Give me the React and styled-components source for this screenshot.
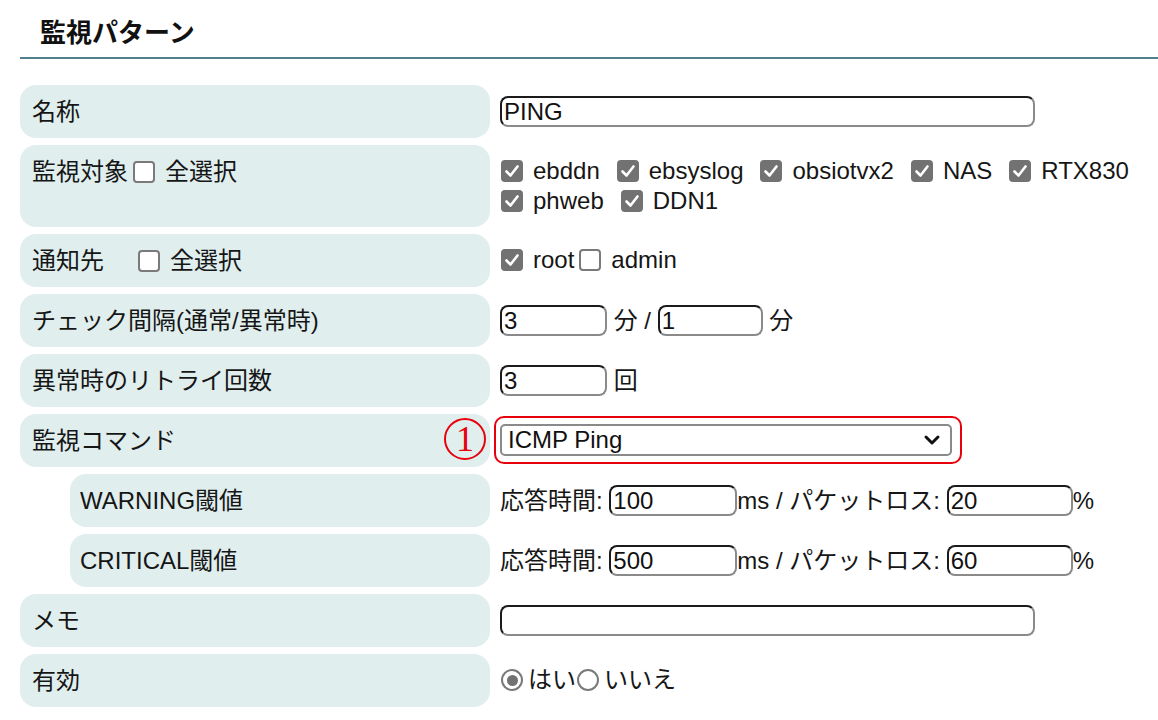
import React from "react";
import styled, { createGlobalStyle } from "styled-components";

const GlobalStyle = createGlobalStyle`
  html, body {
    margin: 0;
    padding: 0;
    background: #fff;
  }
  body {
    font-family: "Liberation Sans", "Noto Sans CJK JP", sans-serif;
    color: #111;
  }
`;

const Page = styled.div`
  width: 1158px;
  height: 720px;
  overflow: hidden;
  box-sizing: border-box;
`;

const Title = styled.h2`
  margin: 0 0 0 20px;
  padding: 14px 0 9px 20px;
  font-family: "Noto Sans CJK JP", sans-serif;
  font-size: 26px;
  font-weight: 700;
  line-height: 34px;
  color: #111;
  border-bottom: 2px solid #4f808c;
`;

const Form = styled.div`
  display: flex;
  flex-direction: column;
  gap: 7px;
  margin-top: 26px;
  padding: 0 18px 0 20px;
`;

const Row = styled.div`
  display: grid;
  grid-template-columns: 470px 1fr;
  column-gap: 10px;
`;

const Label = styled.div`
  display: flex;
  align-items: flex-start;
  margin-left: ${({ $indent }) => ($indent ? "50px" : "0")};
  padding: 11px 12px 11px ${({ $indent }) => ($indent ? "10px" : "12px")};
  background: #e0eeee;
  border-radius: 16px;
  font-size: 24px;
  line-height: 31px;
  color: #161616;
`;

const Value = styled.div`
  display: flex;
  flex-wrap: wrap;
  align-items: center;
  align-content: flex-start;
  column-gap: ${({ $gap }) => $gap ?? 0}px;
  padding: 11px 0;
  font-size: 24px;
  line-height: 30px;
  color: #161616;
  white-space: pre;
`;

const TextInput = styled.input`
  box-sizing: border-box;
  width: ${({ $width }) => $width}px;
  height: 31px;
  margin: 0;
  padding: 0 2px;
  font-family: "Liberation Sans", sans-serif;
  font-size: 24px;
  color: #111;
  background: #fff;
  border: 2px solid;
  border-color: #1b1b1b #8a8a8a #8a8a8a #1b1b1b;
  border-radius: 8px;
  outline: none;
`;

const CheckItem = styled.span`
  display: inline-flex;
  align-items: center;
  margin-left: ${({ $offset }) => $offset ?? 0}px;
`;

const Box = styled.span`
  box-sizing: border-box;
  display: inline-flex;
  align-items: center;
  justify-content: center;
  width: 22px;
  height: 22px;
  margin: 0 10px 0 1px;
  border-radius: 4px;
  background: ${({ $checked }) => ($checked ? "#727272" : "#fff")};
  border: ${({ $checked }) => ($checked ? "none" : "2px solid #7a7a7a")};
`;

const Radio = styled.span`
  box-sizing: border-box;
  display: inline-flex;
  align-items: center;
  justify-content: center;
  width: 22px;
  height: 22px;
  margin: 0 5px 0 1px;
  border-radius: 50%;
  border: 2px solid #7a7a7a;
  background: #fff;

  &::after {
    content: "";
    width: 11px;
    height: 11px;
    border-radius: 50%;
    background: ${({ $checked }) => ($checked ? "#727272" : "transparent")};
  }
`;

const Annotated = styled.div`
  position: relative;
  margin: -9px 0 -9px -6px;
  padding: 6px 8px 6px 4px;
  border: 2px solid #e8000b;
  border-radius: 10px;
`;

const Marker = styled.span`
  position: absolute;
  left: -52px;
  top: 0px;
  box-sizing: border-box;
  display: flex;
  align-items: center;
  justify-content: center;
  width: 42px;
  height: 42px;
  border: 2px solid #e8000b;
  border-radius: 50%;
  font-family: "Liberation Serif", serif;
  font-size: 36px;
  line-height: 1;
  color: #e8000b;
`;

const Select = styled.div`
  box-sizing: border-box;
  display: flex;
  align-items: center;
  justify-content: space-between;
  width: 452px;
  height: 32px;
  padding: 0 8px 0 6px;
  border: 2px solid #8a8a8a;
  border-radius: 5px;
  background: #fff;
  font-size: 24px;
  line-height: 28px;
  color: #111;
`;

const CheckMark = () => (
  <svg width="16" height="16" viewBox="0 0 16 16">
    <polyline points="2.5,8.5 6.5,12.5 13.5,3.5" fill="none" stroke="#fff" strokeWidth="2.6" strokeLinecap="round" strokeLinejoin="round" />
  </svg>
);

const Check = ({ checked, children, offset }) => (
  <CheckItem $offset={offset}>
    <Box $checked={checked}>{checked && <CheckMark />}</Box>
    {children}
  </CheckItem>
);

const Chevron = () => (
  <svg width="20" height="20" viewBox="0 0 20 20">
    <polyline points="4,7 10,13 16,7" fill="none" stroke="#111" strokeWidth="3" strokeLinecap="round" strokeLinejoin="round" />
  </svg>
);

const targets = ["ebddn", "ebsyslog", "obsiotvx2", "NAS", "RTX830", "phweb", "DDN1"];

const Threshold = ({ time, loss }) => (
  <Value>
    {"応答時間: "}
    <TextInput $width={128} defaultValue={time} readOnly />
    {"ms / パケットロス: "}
    <TextInput $width={126} defaultValue={loss} readOnly />
    {"%"}
  </Value>
);

export default function App() {
  return (
    <Page>
      <GlobalStyle />
      <Title>監視パターン</Title>
      <Form>
        <Row>
          <Label>名称</Label>
          <Value>
            <TextInput $width={535} defaultValue="PING" readOnly />
          </Value>
        </Row>
        <Row>
          <Label>
            監視対象
            <Check offset={4}>全選択</Check>
          </Label>
          <Value $gap={16}>
            {targets.map((t) => (
              <Check key={t} checked>
                {t}
              </Check>
            ))}
          </Value>
        </Row>
        <Row>
          <Label>
            通知先
            <Check offset={33}>全選択</Check>
          </Label>
          <Value $gap={4}>
            <Check checked>root</Check>
            <Check>admin</Check>
          </Value>
        </Row>
        <Row>
          <Label>チェック間隔(通常/異常時)</Label>
          <Value>
            <TextInput $width={107} defaultValue="3" readOnly />
            {" 分 / "}
            <TextInput $width={105} defaultValue="1" readOnly />
            {" 分"}
          </Value>
        </Row>
        <Row>
          <Label>異常時のリトライ回数</Label>
          <Value>
            <TextInput $width={107} defaultValue="3" readOnly />
            {" 回"}
          </Value>
        </Row>
        <Row>
          <Label>監視コマンド</Label>
          <Value>
            <Annotated>
              <Marker>1</Marker>
              <Select>
                <span>ICMP Ping</span>
                <Chevron />
              </Select>
            </Annotated>
          </Value>
        </Row>
        <Row>
          <Label $indent>WARNING閾値</Label>
          <Threshold time="100" loss="20" />
        </Row>
        <Row>
          <Label $indent>CRITICAL閾値</Label>
          <Threshold time="500" loss="60" />
        </Row>
        <Row>
          <Label>メモ</Label>
          <Value>
            <TextInput $width={535} defaultValue="" readOnly />
          </Value>
        </Row>
        <Row>
          <Label>有効</Label>
          <Value>
            <Radio $checked />
            {"はい"}
            <Radio />
            {"いいえ"}
          </Value>
        </Row>
      </Form>
    </Page>
  );
}
